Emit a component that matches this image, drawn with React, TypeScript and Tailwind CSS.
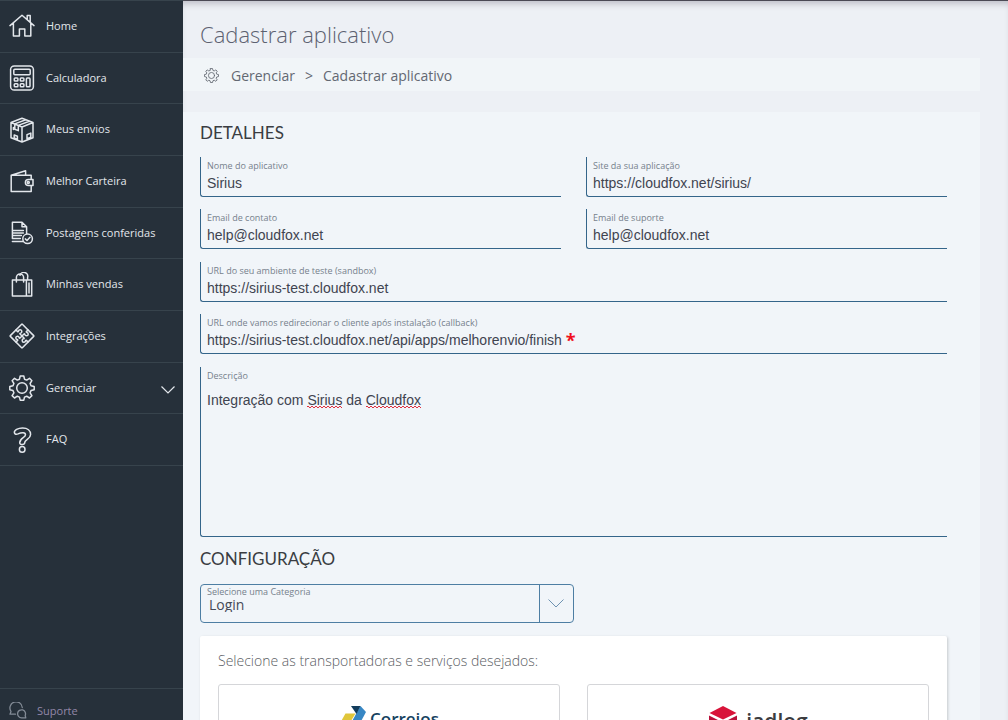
import type { ReactNode } from "react";

const iconProps = {
  viewBox: "0 0 26 26",
  fill: "none",
  stroke: "currentColor",
  strokeWidth: 1.5,
  strokeLinecap: "round" as const,
  strokeLinejoin: "round" as const,
  "aria-hidden": true,
};

function Icon({ children, className = "size-[26px] shrink-0" }: { children: ReactNode; className?: string }) {
  return (
    <svg {...iconProps} className={className}>
      {children}
    </svg>
  );
}

const gearPath =
  "M11.2 1h3.6l.7 3.2 2.2.9 2.8-1.8 2.4 2.4-1.8 2.8.9 2.2 3.2.7v3.400l-3.200.8-.9 2.200 1.800 2.800-2.400 2.400-2.800-1.800-2.200.9-.7 3.100h-3.600l-.7-3.100-2.200-.9-2.800 1.800-2.400-2.400 1.800-2.800-.9-2.200-3.200-.8v-3.400l3.200-.7.9-2.200-1.800-2.800 2.400-2.400 2.800 1.800 2.200-.9z";

function GearIcon({ className }: { className?: string }) {
  return (
    <Icon className={className}>
      <path d={gearPath} />
      <circle cx="13" cy="13" r="5.3" />
    </Icon>
  );
}

const HomeIcon = (
  <Icon>
    <path d="M1 12.6 13 2.2l12 10.4M4.4 10v13h6v-7h5.4v7h6V10M18.2 6.4V2.6h3v6.6" />
  </Icon>
);

const CalculatorIcon = (
  <Icon>
    <rect x="1.6" y="0.9" width="22.8" height="24.2" rx="3.6" />
    <rect x="4.8" y="4.2" width="16.4" height="5.6" rx="1" />
    <rect x="5.3" y="13" width="3.6" height="3" rx=".8" />
    <rect x="11.3" y="13" width="3.6" height="3" rx=".8" />
    <rect x="5.3" y="18.8" width="3.6" height="3" rx=".8" />
    <rect x="11.3" y="18.8" width="3.6" height="3" rx=".8" />
    <rect x="17.4" y="13" width="3.6" height="8.8" rx=".9" />
  </Icon>
);

const BoxIcon = (
  <Icon>
    <path d="M13 10 2 5.5v15.2L13 25l11-4.300V5.500zM13 10v15M2 5.500 13 1.200l11 4.300M5.800 6.900l11-4.200M9.300 8.400l11-4.200M5.800 7v5.200l3.500 1.400V8.600M5.200 18v3l3.200 1.200v-3zM18 17.600l3.800-1.500v4.200L18 21.800zM4.400 10.500v2" />
  </Icon>
);

const WalletIcon = (
  <Icon>
    <path d="M2.200 7.200h20v4.300M22.200 17.600v5.800h-20V7.200L16.600 2.800v4M24 11.600h-4.600a3 3 0 0 0 0 6H24z" />
    <circle cx="19.300" cy="14.600" r="1" />
  </Icon>
);

const DocumentIcon = (
  <Icon>
    <path d="M14 21.500H3.400M3.400 18.500V2.200H13l4.600 4.600v6.800M13 2.200v4.600h4.600M3.400 10.500h11M3.400 13h11M3.400 15.600h9M3.400 18.400h8" />
    <circle cx="18.600" cy="18.800" r="4.800" />
    <path d="m16.300 18.900 1.700 1.600 3-3.200" />
  </Icon>
);

const BagIcon = (
  <Icon>
    <path d="M3.400 8h19.300v16H3.400zM17.400 8v16M20 11v10M7.400 10V5.500a3.600 3.600 0 0 1 7.200 0V10M11 3.200a3.500 3.500 0 0 1 7.600 2.300V8" />
  </Icon>
);

const seam = "M-8.500 0h2.300c.6 0 .5-.5.3-.9a1.700 1.700 0 1 1 2.800 0c-.3.4-.3.9.3.9H0";

const PuzzleIcon = (
  <Icon>
    <g transform="translate(13 13) rotate(45)">
      <rect x="-8.500" y="-8.500" width="17" height="17" rx=".5" />
      <path d={seam} />
      <path d={seam} transform="rotate(90)" />
      <path d={seam} transform="rotate(180)" />
      <path d={seam} transform="rotate(270)" />
    </g>
  </Icon>
);

const QuestionIcon = (
  <Icon>
    <path d="M5.400 5.800c-.5-2.600 3.600-4.900 8.200-4.900 5 0 8 2.700 8 6.500 0 4.600-5.900 5-5.900 8.300 0 2.200-5 2.500-5 0 0-5 5.800-5.100 5.800-8 0-2.400-3.600-2.600-7.500-.8-1.900.8-3.200.3-3.600-1.100z" />
    <circle cx="13.200" cy="22.400" r="2.800" />
  </Icon>
);

const menu = [
  { label: "Home", icon: HomeIcon },
  { label: "Calculadora", icon: CalculatorIcon },
  { label: "Meus envios", icon: BoxIcon },
  { label: "Melhor Carteira", icon: WalletIcon },
  { label: "Postagens conferidas", icon: DocumentIcon },
  { label: "Minhas vendas", icon: BagIcon },
  { label: "Integrações", icon: PuzzleIcon },
  { label: "Gerenciar", icon: <GearIcon />, expandable: true },
  { label: "FAQ", icon: QuestionIcon },
];

function Sidebar() {
  return (
    <aside className="flex w-[183px] shrink-0 flex-col justify-between border-t border-[#37434c] bg-[#26303a] text-[#e3e7ec]">
      <nav className="grid h-[465px] grid-rows-9">
        {menu.map((item) => (
          <a key={item.label} href="#" className="flex items-center gap-[11px] border-b border-[#37434c] pr-2 pl-[9px] text-[11px]">
            {item.icon}
            <span className="grow whitespace-nowrap">{item.label}</span>
            {item.expandable && (
              <svg viewBox="0 0 14 8" className="mt-1 w-[14px]" fill="none" stroke="currentColor" strokeWidth="1.2" aria-hidden>
                <path d="m.5.5 6.500 6.500 6.500-6.500" />
              </svg>
            )}
          </a>
        ))}
      </nav>
      <a href="#" className="flex h-8 items-start gap-[10px] border-t border-[#37434c] pt-3 pl-[9px] text-[11px] leading-5 text-[#9287a8]">
        <svg viewBox="0 0 18 17" className="mt-px h-[17px] w-[18px] text-[#838b96]" fill="none" stroke="currentColor" strokeWidth="1.300" strokeLinecap="round" strokeLinejoin="round" aria-hidden>
          <path d="M6.500 12.200H1l1-2.700A6.200 6.200 0 1 1 13.300 5.500" />
          <path d="M16.800 15.800h-4.300a4 4 0 1 1 3.700-2.300z" />
        </svg>
        <span>Suporte</span>
      </a>
    </aside>
  );
}

const fieldBox = "flex h-10 flex-col rounded-bl-[3px] border-b border-l border-[#34658a] pl-[6px]";
const labelText = "pt-[3px] text-[9px] leading-3 text-[#76818c]";
const inputText = "bg-transparent font-['Liberation_Sans',sans-serif] text-[14px] leading-5 text-[#3f4450] outline-none";
const heading = "font-['Lato',sans-serif] text-[17px] leading-6 text-[#3a3d42]";

function Field({ id, label, value }: { id: string; label: string; value: string }) {
  return (
    <div className={fieldBox}>
      <label htmlFor={id} className={labelText}>
        {label}
      </label>
      <input id={id} type="text" defaultValue={value} className={`${inputText} mt-px w-full`} />
    </div>
  );
}

function Squiggle({ width, className }: { width: number; className: string }) {
  const waves = "q1 -2 2 0t2 0".repeat(Math.ceil(width / 4));
  return (
    <svg aria-hidden width={width} height="4" fill="none" stroke="#e0303f" className={`pointer-events-none absolute ${className}`}>
      <path d={`M0 2${waves}`} />
    </svg>
  );
}

function CorreiosLogo() {
  return (
    <div className="flex items-start gap-[3px]">
      <svg viewBox="0 0 28 26" className="h-[26px] w-[28px]" aria-hidden>
        <path d="M6.500 7.500h10L9.500 19H0z" fill="#e0c63a" />
        <path d="M21.500 0 27 6l-7 13h-9l6-11z" fill="#3787c4" />
        <path d="M12 0h9.500L17.500 8z" fill="#123c5c" />
      </svg>
      <span className="pt-px text-[17px] leading-6 font-semibold text-[#16425f]">Correios</span>
    </div>
  );
}

function JadlogLogo() {
  return (
    <div className="flex items-start gap-2">
      <svg viewBox="0 0 30 32" className="h-[32px] w-[30px]" aria-hidden>
        <path d="M15 0 28.500 7 15 13.500 1.500 7z" fill="#d8143a" />
        <path d="M1 9.500 14 16v15L1 24zM29 9.500 16 16v15l13-7z" fill="#b9103a" />
      </svg>
      <span className="pt-[3px] text-[21px] leading-6 font-semibold text-[#3c3c3f]">jadlog</span>
    </div>
  );
}

export default function App() {
  return (
    <div className="flex h-screen overflow-hidden bg-[#edf0f5] font-['Open_Sans',sans-serif]">
      <Sidebar />
      <main className="min-w-0 grow overflow-hidden border-t border-[#4b4a55] pr-7 shadow-[inset_0_6px_6px_-3px_#bfc0c9]">
        <h1 className="pt-[17px] pl-[17px] text-[22px] leading-8 font-light text-[#5c6170]">Cadastrar aplicativo</h1>
        <nav aria-label="Trilha" className="mt-2 flex h-[33px] items-center bg-[#f1f5f8] pt-px pl-[21px] text-[14px] text-[#636872]">
          <GearIcon className="size-[15px]" />
          <a href="#" className="ml-3">Gerenciar</a>
          <span className="mx-[10px]">&gt;</span>
          <span>Cadastrar aplicativo</span>
        </nav>

        <form className="mt-[21px] bg-[#f1f5f9] pr-[33px] pb-10 pl-[17px]">
          <h2 className={`${heading} pt-[9px]`}>DETALHES</h2>
          <div className="mt-3 flex flex-col gap-[13px]">
            <div className="grid grid-cols-2 gap-x-[25px] gap-y-3">
              <Field id="nome" label="Nome do aplicativo" value="Sirius" />
              <Field id="site" label="Site da sua aplicação" value="https://cloudfox.net/sirius/" />
              <Field id="contato" label="Email de contato" value="help@cloudfox.net" />
              <Field id="suporte" label="Email de suporte" value="help@cloudfox.net" />
            </div>
            <div className="flex flex-col gap-3">
              <Field id="sandbox" label="URL do seu ambiente de teste (sandbox)" value="https://sirius-test.cloudfox.net" />
              <div className={fieldBox}>
                <label htmlFor="callback" className={labelText}>
                  URL onde vamos redirecionar o cliente após instalação (callback)
                </label>
                <div className="mt-px flex gap-1">
                  <input
                    id="callback"
                    type="text"
                    defaultValue="https://sirius-test.cloudfox.net/api/apps/melhorenvio/finish"
                    className={`${inputText} field-sizing-content`}
                  />
                  <span className="text-[18px] leading-5 font-bold text-[#f00f1c]">*</span>
                </div>
              </div>
            </div>
            <div className="relative flex h-[170px] flex-col rounded-bl-[3px] border-b border-l border-[#34658a] pl-[6px]">
              <label htmlFor="descricao" className={labelText}>
                Descrição
              </label>
              <textarea
                id="descricao"
                spellCheck={false}
                defaultValue="Integração com Sirius da Cloudfox"
                className={`${inputText} mt-2 w-full grow resize-none`}
              />
              <Squiggle width={35} className="top-[38px] left-[106px]" />
              <Squiggle width={55} className="top-[38px] left-[165px]" />
            </div>
          </div>

          <h2 className={`${heading} mt-[10px]`}>CONFIGURAÇÃO</h2>
          <div className="relative mt-[13px] flex h-[39px] w-1/2 flex-col rounded-[4px] border border-[#4d7ea3] pl-[6px]">
            <label htmlFor="categoria" className="pt-px text-[9px] leading-3 text-[#76818c]">
              Selecione uma Categoria
            </label>
            <select id="categoria" className="h-[14px] w-full appearance-none bg-transparent pl-[2px] text-[14px] leading-[14px] text-[#454a58] outline-none">
              <option>Login</option>
            </select>
            <div className="pointer-events-none absolute inset-y-0 right-0 flex w-[34px] items-center justify-center border-l border-[#4d7ea3]">
              <svg viewBox="0 0 16 9" className="w-4" fill="none" stroke="#6f93b2" aria-hidden>
                <path d="m.5.5 7.500 7.500L15.500.500" />
              </svg>
            </div>
          </div>

          <section className="mt-[13px] rounded-[2px] bg-white px-[18px] pt-[15px] pb-6 shadow-[1px_1px_3px_rgba(0,0,0,0.180)]">
            <p className="text-[14px] leading-5 font-light text-[#5a5d63]">Selecione as transportadoras e serviços desejados:</p>
            <div className="mt-[13px] grid grid-cols-2 gap-[27px]">
              <div className="flex h-40 justify-center rounded-[3px] border border-[#d5d6d9] pt-[21px]">
                <CorreiosLogo />
              </div>
              <div className="flex h-40 justify-center rounded-[3px] border border-[#d5d6d9] pt-[21px]">
                <JadlogLogo />
              </div>
            </div>
          </section>
        </form>
      </main>
    </div>
  );
}
